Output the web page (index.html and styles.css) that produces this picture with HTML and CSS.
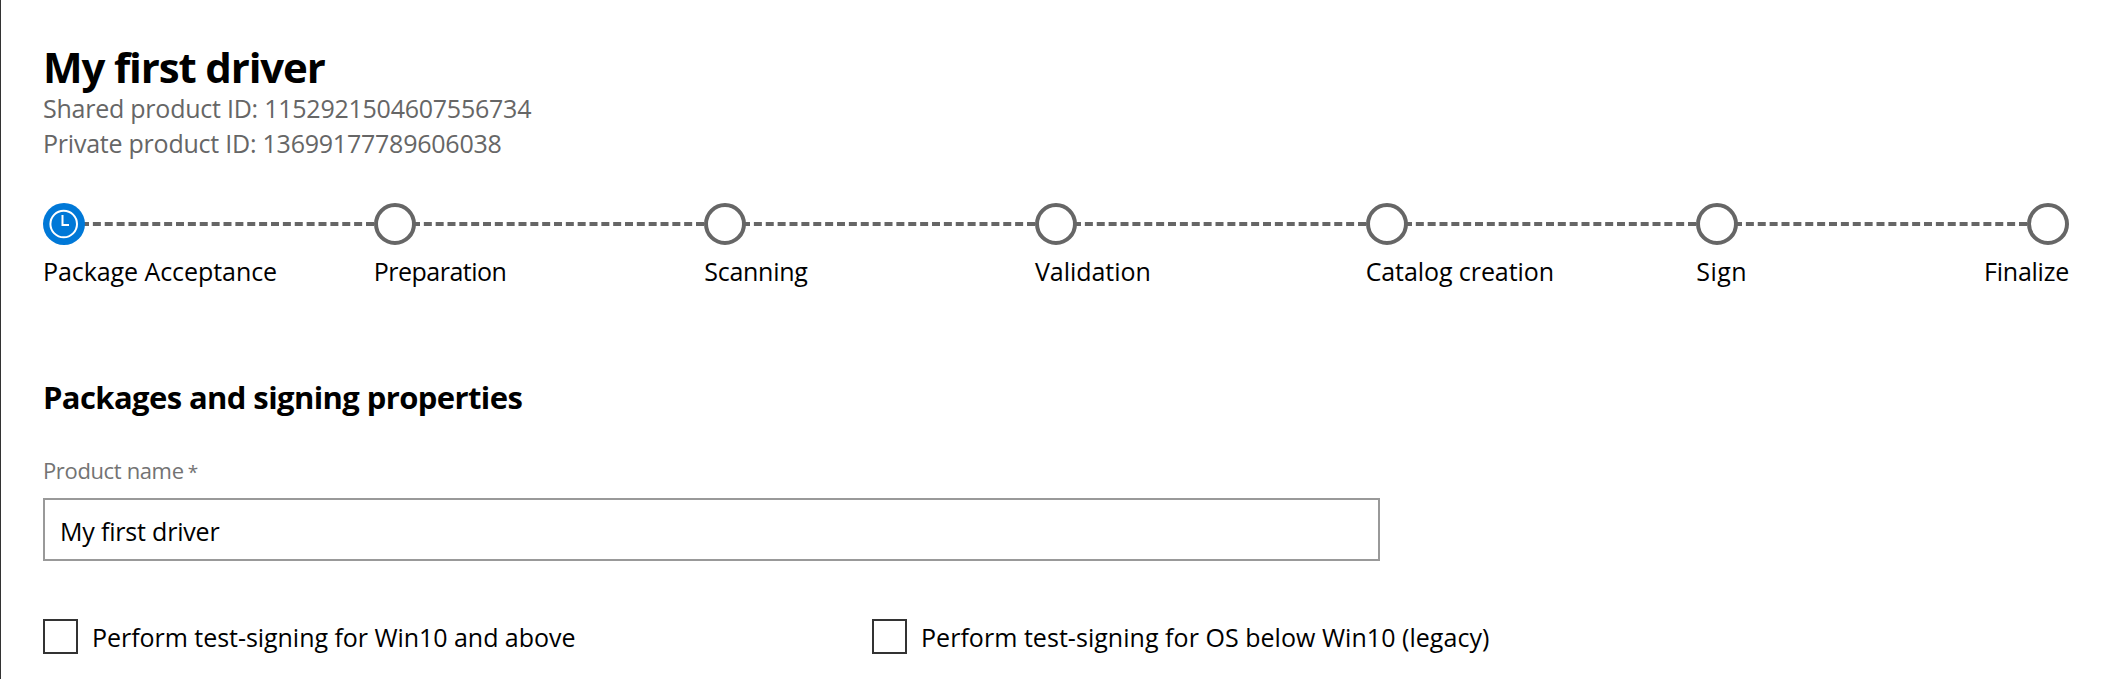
FILE: index.html
```
<!DOCTYPE html>
<html lang="en">
<head>
<meta charset="utf-8">
<title>My first driver</title>
<link rel="stylesheet" href="styles.css">
</head>
<body>
<main class="page">
  <h1 class="title">My first driver</h1>
  <p class="product-id shared">Shared product ID: 1152921504607556734</p>
  <p class="product-id private">Private product ID: 13699177789606038</p>

  <ol class="stepper">
    <li class="step acceptance">
      <div class="track">
        <svg class="clock" viewBox="0 0 42 42">
          <circle cx="21" cy="21" r="21" fill="#0078d7"/>
          <circle cx="20.7" cy="21" r="13.3" fill="none" stroke="#fff" stroke-width="2"/>
          <path d="M19.5 12v10H26" fill="none" stroke="#fff" stroke-width="2"/>
        </svg>
        <span class="line"></span>
      </div>
      <span class="label">Package Acceptance</span>
    </li>
    <li class="step preparation">
      <div class="track"><span class="dot"></span><span class="line"></span></div>
      <span class="label">Preparation</span>
    </li>
    <li class="step scanning">
      <div class="track"><span class="dot"></span><span class="line"></span></div>
      <span class="label">Scanning</span>
    </li>
    <li class="step validation">
      <div class="track"><span class="dot"></span><span class="line"></span></div>
      <span class="label">Validation</span>
    </li>
    <li class="step catalog">
      <div class="track"><span class="dot"></span><span class="line"></span></div>
      <span class="label">Catalog creation</span>
    </li>
    <li class="step sign">
      <div class="track"><span class="dot"></span><span class="line"></span></div>
      <span class="label">Sign</span>
    </li>
    <li class="step finalize">
      <div class="track"><span class="dot"></span></div>
      <span class="label">Finalize</span>
    </li>
  </ol>

  <h2 class="section-title">Packages and signing properties</h2>
  <label class="field-label" for="name">Product name<span class="required">*</span></label>
  <input class="field" id="name" type="text" value="My first driver">

  <div class="options">
    <label class="option"><input class="check" type="checkbox"><span class="option-text">Perform test-signing for Win10 and above</span></label>
    <label class="option"><input class="check" type="checkbox"><span class="option-text legacy">Perform test-signing for OS below Win10 (legacy)</span></label>
  </div>
</main>
</body>
</html>
```
FILE: styles.css
```
* { box-sizing: border-box; }

body {
  margin: 0;
  background: #fff;
  color: #000;
  font: 25px/35px "Open Sans", "Noto Sans", sans-serif;
}

.page {
  height: 679px;
  padding: 42px 42px 0;
  border-left: 1px solid #333;
  overflow: hidden;
}

.title {
  margin: 0 0 -1px;
  font-size: 42px;
  line-height: 50px;
  letter-spacing: -1.14px;
}

.product-id { margin: 0; color: #666; }
.shared { letter-spacing: -0.24px; }
.private { letter-spacing: -0.23px; }

.stepper {
  display: flex;
  margin: 42px 0 0;
  padding: 0;
  list-style: none;
}

.step { flex: 0 0 330.67px; min-width: 0; white-space: nowrap; }
.track { display: flex; align-items: center; height: 42px; margin-bottom: 9px; }
.clock, .dot { position: relative; z-index: 1; flex: none; width: 42px; height: 42px; }
.dot { border: 4px solid #666; border-radius: 50%; background: #fff; }
.line { flex: 1; margin-left: -4px; border-top: 4px dashed #666; }
.label { display: block; }

.acceptance { letter-spacing: -0.07px; }
.preparation { letter-spacing: -0.49px; }
.scanning { letter-spacing: -0.28px; }
.validation { letter-spacing: -0.05px; }
.catalog { letter-spacing: -0.08px; }
.sign { letter-spacing: 0.45px; }

.finalize {
  display: flex;
  flex: 0 0 42px;
  flex-direction: column;
  align-items: flex-end;
  letter-spacing: -0.25px;
}

.section-title {
  margin: 87px 0 0;
  font-size: 31px;
  line-height: 42px;
  letter-spacing: -0.6px;
}

.field-label {
  display: block;
  height: 30px;
  margin-top: 37px;
  color: #737373;
  font-size: 22px;
  line-height: 30px;
  letter-spacing: -0.36px;
}

.required { margin-left: 4px; font-size: 19px; line-height: 1; }

.field {
  display: block;
  width: 1337px;
  height: 63px;
  margin: 13px 0 0;
  padding: 13px 15px 11px;
  border: 2px solid #999;
  border-radius: 0;
  background: #fff;
  color: #000;
  font: inherit;
  letter-spacing: -0.19px;
}

.options {
  display: grid;
  grid-template-columns: 829px 1fr;
  margin-top: 58px;
}

.option { display: flex; gap: 14px; white-space: nowrap; }

.check {
  flex: none;
  width: 35px;
  height: 35px;
  margin: 0;
  border: 2px solid #333;
  background: #fff;
  appearance: none;
}

.option-text { margin-top: 1px; letter-spacing: -0.04px; }
.legacy { letter-spacing: 0.04px; }
```
